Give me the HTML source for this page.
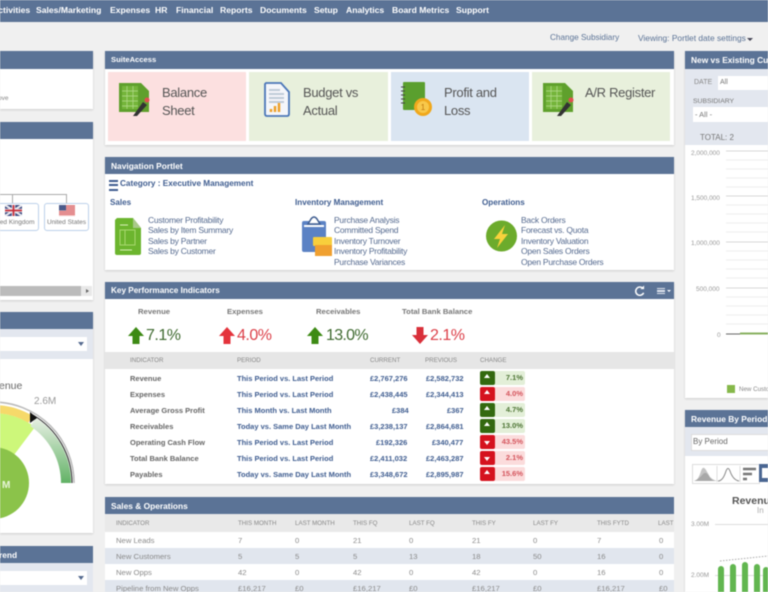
<!DOCTYPE html>
<html><head><meta charset="utf-8"><style>
html,body{margin:0;padding:0;background:#f0f0f0}
#p{position:relative;width:768px;height:592px;overflow:hidden;background:#f0f0f0;font-family:"Liberation Sans",sans-serif;filter:blur(.5px)}
#p div,#p span,#p svg{position:absolute}
#p span{white-space:nowrap;line-height:1}
.n{color:#fff;font-weight:bold;font-size:8.6px;top:6px}
.h{background:#5b7396;height:18px}
.ht{color:#fff;font-weight:bold;font-size:8.4px;margin-top:.8px}
.w{background:#fff;box-shadow:0 1px 2px #ccc}
.tt{font-size:13px;letter-spacing:-.3px;color:#555}
.l{font-size:8.5px;letter-spacing:-.25px;color:#566b90;margin-top:.4px}
.k{font-size:7.5px;color:#666;font-weight:bold}
.kt{font-size:7.7px;color:#777;font-weight:bold}
.pc{font-size:7.5px;color:#3f5d90;font-weight:bold}
.th{font-size:6.2px;color:#888}
.s{font-size:7.7px;color:#8a8a8a}
.big{font-size:16px}
.hd{font-size:8.1px;color:#3f5d90;font-weight:bold}
.ch{height:14px;left:480px;width:45px;border-radius:2px}
.ch i{position:absolute;left:0;top:0;width:15px;height:14px;border-radius:2px}
.ch i:after{content:"";position:absolute;left:4px;top:3px;border:3.5px solid transparent;border-top:0;border-bottom:4px solid #fff}
.ch.d i:after{border-bottom:0;border-top:4px solid #fff;top:6px}
.ch b{position:absolute;right:2px;top:3px;font-size:7.5px;line-height:1}
.g{background:#e3efd8}.g i{background:#33690f}.g b{color:#4d7434}
.r{background:#fbdcdc}.r i{background:#d5121e}.r b{color:#d4545c}
</style></head><body><div id="p">
<div style="left:0;top:0;width:768px;height:22px;background:#5b7396"></div>
<span class="n" style="left:-8px">Activities</span>
<span class="n" style="left:36px">Sales/Marketing</span>
<span class="n" style="left:110px">Expenses</span>
<span class="n" style="left:155px">HR</span>
<span class="n" style="left:176px">Financial</span>
<span class="n" style="left:220px">Reports</span>
<span class="n" style="left:260px">Documents</span>
<span class="n" style="left:314px">Setup</span>
<span class="n" style="left:346px">Analytics</span>
<span class="n" style="left:392px">Board Metrics</span>
<span class="n" style="left:456px">Support</span>
<span style="left:550px;top:33.500px;font-size:8.200px;color:#5b7396">Change Subsidiary</span>
<span style="left:638px;top:33.500px;font-size:8.400px;color:#5b7396">Viewing: Portlet date settings</span>
<div style="left:747px;top:38px;border:3px solid transparent;border-top:3px solid #445;border-bottom:0"></div>

<!-- left column -->
<div class="w" style="left:0;top:51px;width:93px;height:58px"></div>
<div class="h" style="left:0;top:51px;width:93px"></div>
<span style="left:-2px;top:96px;font-size:6.500px;color:#888">ove</span>
<div class="w" style="left:0;top:122px;width:93px;height:178px"></div>
<div class="h" style="left:0;top:122px;width:93px;height:17px"></div>
<div style="left:0;top:194px;width:66px;height:1px;background:#aaa"></div>
<div style="left:12px;top:194px;width:1px;height:9px;background:#aaa"></div>
<div style="left:66px;top:194px;width:1px;height:9px;background:#aaa"></div>
<div style="left:-10px;top:203px;width:47px;height:26px;background:#fff;border:1px solid #bcd0ea;border-radius:3px"></div>
<div style="left:44px;top:203px;width:43px;height:26px;background:#fff;border:1px solid #bcd0ea;border-radius:3px"></div>
<svg style="left:5px;top:205px" width="17" height="11" viewBox="0 0 17 11"><rect width="17" height="11" fill="#3c4a80"/><path d="M0 0L17 11M17 0L0 11" stroke="#e8e8ee" stroke-width="2"/><path d="M8.500 0V11M0 5.500H17" stroke="#e8e8ee" stroke-width="3.500"/><path d="M8.500 0V11M0 5.500H17" stroke="#c8303c" stroke-width="1.800"/></svg>
<svg style="left:59px;top:205px" width="16" height="11" viewBox="0 0 16 11"><rect width="16" height="11" fill="#f0b4b4"/><path d="M0 1H16M0 3H16M0 5H16M0 7H16M0 9H16" stroke="#d9686c" stroke-width=".9"/><rect width="7" height="5.500" fill="#4a5a8a"/></svg>
<span style="left:-2px;top:219.500px;font-size:6.500px;color:#777">ted Kingdom</span>
<span style="left:47px;top:219.500px;font-size:6.500px;color:#777">United States</span>
<div style="left:0;top:286px;width:81px;height:10px;background:#bbb"></div>
<div style="left:81px;top:286px;width:11px;height:10px;background:#e8e8e8"></div>
<div style="left:86px;top:289px;border:2px solid transparent;border-left:3px solid #666;border-right:0"></div>

<div class="w" style="left:0;top:312px;width:93px;height:221px"></div>
<div style="left:0;top:329px;width:93px;height:30px;background:#e3e7ef"></div>
<div class="h" style="left:0;top:312px;width:93px;height:17px"></div>
<div style="left:0;top:337px;width:87px;height:14px;background:#fff"></div>
<div style="left:78px;top:342px;border:3px solid transparent;border-top:4px solid #566b90;border-bottom:0"></div>
<span style="left:-1px;top:381px;font-size:10.500px;color:#666">enue</span>
<span style="left:34px;top:397px;font-size:10px;color:#999">2.6M</span>
<svg style="left:0;top:385px" width="93" height="148" viewBox="0 0 93 148">
<defs><linearGradient id="gg" x1="0" y1="0" x2="0" y2="1"><stop offset="0" stop-color="#e8f0e4"/><stop offset="1" stop-color="#62b266"/></linearGradient></defs>
<path d="M-7 28A70 70 0 0 1 35 42L-7 98Z" fill="#cdf77a"/>
<path d="M-7 20A78 78 0 0 1 32.500 30.800L28.500 37.700A70 70 0 0 0-7 28Z" fill="#f6d96a"/>
<path d="M35.900 32.900A78 78 0 0 1 71 98H61A68 68 0 0 0 30.400 41.200Z" fill="url(#gg)"/>
<path d="M-7 17A81 81 0 0 1 74 98" fill="none" stroke="#bbb" stroke-width="1.600"/>
<path d="M33 30A79 79 0 0 1 72 98" fill="none" stroke="#222" stroke-width="1"/>
<path d="M30 27L37 33L30 38Z" fill="#111"/>
<circle cx="-7" cy="98" r="36" fill="#8bc34a"/>
</svg>
<span style="left:2px;top:481px;font-size:10px;font-weight:bold;color:#e8f5d8">M</span>
<div class="h" style="left:0;top:546px;width:93px;height:17px"></div>
<span class="ht" style="left:-1px;top:550px">rend</span>
<div style="left:0;top:563px;width:93px;height:29px;background:#e3e7ef"></div>
<div style="left:0;top:571px;width:87px;height:14px;background:#fff"></div>
<div style="left:78px;top:576px;border:3px solid transparent;border-top:4px solid #566b90;border-bottom:0"></div>

<!-- SuiteAccess -->
<div class="w" style="left:105px;top:51px;width:569px;height:94px"></div>
<div class="h" style="left:105px;top:51px;width:569px"></div>
<span class="ht" style="left:111px;top:55px;font-size:7.600px">SuiteAccess</span>
<div style="left:108px;top:72px;width:138px;height:69px;background:#fce0e0"></div>
<div style="left:249px;top:72px;width:139px;height:69px;background:#e8f0dc"></div>
<div style="left:391px;top:72px;width:138px;height:69px;background:#dae5f1"></div>
<div style="left:532px;top:72px;width:138px;height:69px;background:#e8f0dc"></div>
<span class="tt" style="left:162px;top:86px">Balance</span><span class="tt" style="left:162px;top:104px">Sheet</span>
<span class="tt" style="left:303px;top:86px">Budget vs</span><span class="tt" style="left:303px;top:104px">Actual</span>
<span class="tt" style="left:444px;top:86px">Profit and</span><span class="tt" style="left:444px;top:104px">Loss</span>
<span class="tt" style="left:585px;top:86px">A/R Register</span>
<svg style="left:119px;top:83px" width="32" height="34" viewBox="0 0 32 34"><path d="M0 0H22L30 8V29H0Z" fill="#5fa02c"/><path d="M3 3H19V26H3Z" fill="#74b53a"/><path d="M3 8H19M3 13H19M3 18H19M3 23H19M8 3V26M14 3V26" stroke="#b5dc8e" stroke-width=".7"/><path d="M14 33L24 19L28 22L18 33Z" fill="#333"/><circle cx="28" cy="17" r="2.500" fill="#e05050"/></svg>
<svg style="left:264px;top:82px" width="26" height="35" viewBox="0 0 26 35"><path d="M2 1H17L25 10V32Q25 34 23 34H3Q1 34 1 32V2Z" fill="#f4f6fa" stroke="#4a76b8" stroke-width="1.800"/><path d="M5 8H16M5 12H20M5 16H20M5 20H20" stroke="#c0cad8" stroke-width="2"/><path d="M7 30V27M11 30V24M15 30V21" stroke="#eea02a" stroke-width="2.500"/></svg>
<svg style="left:401px;top:81px" width="32" height="36" viewBox="0 0 32 36"><rect x="2" y="1" width="22" height="28" rx="1" fill="#5a9f2e"/><path d="M0 6H4M0 10H4M0 14H4M0 18H4M0 22H4" stroke="#444" stroke-width="1"/><circle cx="22" cy="26" r="9" fill="#f0a81c"/><circle cx="22" cy="26" r="6" fill="#f8c84a"/><text x="22" y="29" font-size="8" text-anchor="middle" fill="#c07810" font-family="Liberation Sans">1</text></svg>
<svg style="left:543px;top:83px" width="32" height="34" viewBox="0 0 32 34"><path d="M0 0H22L30 8V29H0Z" fill="#5fa02c"/><path d="M3 3H19V26H3Z" fill="#74b53a"/><path d="M3 8H19M3 13H19M3 18H19M3 23H19M8 3V26M14 3V26" stroke="#b5dc8e" stroke-width=".7"/><path d="M14 33L24 19L28 22L18 33Z" fill="#333"/><circle cx="28" cy="17" r="2.500" fill="#e05050"/></svg>

<!-- Navigation -->
<div class="w" style="left:105px;top:157px;width:569px;height:113px"></div>
<div class="h" style="left:105px;top:157px;width:569px;height:17px"></div>
<span class="ht" style="left:111px;top:161px">Navigation Portlet</span>
<div style="left:109px;top:180px;width:9px;height:7px;border-top:2px solid #3f5d90;border-bottom:2px solid #3f5d90"></div>
<div style="left:109px;top:184px;width:9px;height:2px;background:#3f5d90"></div>
<span style="left:120px;top:180px;font-size:8.200px;color:#3f5d90;font-weight:bold">Category : Executive Management</span>
<span class="hd" style="left:110px;top:199px">Sales</span>
<span class="hd" style="left:295px;top:199px">Inventory Management</span>
<span class="hd" style="left:482px;top:199px">Operations</span>
<span class="l" style="left:148px;top:215.500px">Customer Profitability</span>
<span class="l" style="left:148px;top:226px">Sales by Item Summary</span>
<span class="l" style="left:148px;top:236.500px">Sales by Partner</span>
<span class="l" style="left:148px;top:247px">Sales by Customer</span>
<span class="l" style="left:334px;top:215.500px">Purchase Analysis</span>
<span class="l" style="left:334px;top:226px">Committed Spend</span>
<span class="l" style="left:334px;top:236.500px">Inventory Turnover</span>
<span class="l" style="left:334px;top:247px">Inventory Profitability</span>
<span class="l" style="left:334px;top:257.500px">Purchase Variances</span>
<span class="l" style="left:521px;top:215.500px">Back Orders</span>
<span class="l" style="left:521px;top:226px">Forecast vs. Quota</span>
<span class="l" style="left:521px;top:236.500px">Inventory Valuation</span>
<span class="l" style="left:521px;top:247px">Open Sales Orders</span>
<span class="l" style="left:521px;top:257.500px">Open Purchase Orders</span>
<svg style="left:115px;top:218px" width="27" height="38" viewBox="0 0 27 38"><path d="M2 0H18L26 10V35Q26 37 24 37H2Q0 37 0 35V2Z" fill="#6cb52e"/><path d="M18 0L26 10H18Z" fill="#a9c98a"/><path d="M5 7H13M5 32H17" stroke="#d8efb8" stroke-width="1"/><rect x="5" y="12" width="15" height="15" fill="none" stroke="#a8d870" stroke-width="1"/><path d="M10 12V27" stroke="#a8d870" stroke-width="1"/></svg>
<svg style="left:301px;top:215px" width="32" height="42" viewBox="0 0 32 42"><rect x="1" y="6" width="24" height="31" rx="2" fill="#5b82c4"/><path d="M7 9L10 4Q13 0 16 4L19 9Z" fill="#fff" stroke="#3f5d90" stroke-width="1.500"/><rect x="3" y="10" width="20" height="2" fill="#fff"/><rect x="12" y="22" width="19" height="9" rx="1" fill="#f8cf3c"/><rect x="14" y="30" width="17" height="11" fill="#f0a030"/></svg>
<svg style="left:486px;top:219px" width="31" height="35" viewBox="0 0 31 35"><circle cx="15.500" cy="17" r="15.500" fill="#6cab2c"/><path d="M19 6L8 20H14L11 29L22 15H16Z" fill="#f8d23c"/></svg>

<!-- KPI -->
<div class="w" style="left:105px;top:282px;width:569px;height:202px"></div>
<div class="h" style="left:105px;top:282px;width:569px;height:17px"></div>
<span class="ht" style="left:111px;top:286px;font-size:8.200px">Key Performance Indicators</span>
<svg style="left:634px;top:285px" width="11" height="12" viewBox="0 0 12 12"><path d="M10 3.500A4.500 4.500 0 1 0 10.500 8" fill="none" stroke="#fff" stroke-width="1.600"/><path d="M7 4H11V0Z" fill="#fff"/></svg>
<div style="left:657px;top:288px;width:8px;height:4px;border-top:1.500px solid #dfe5ee;border-bottom:1.500px solid #dfe5ee"></div>
<div style="left:657px;top:290px;width:8px;height:1.500px;background:#dfe5ee"></div>
<div style="left:667px;top:290px;border:2px solid transparent;border-top:2px solid #fff;border-bottom:0"></div>
<span class="kt" style="left:138px;top:308px">Revenue</span>
<span class="kt" style="left:227px;top:308px">Expenses</span>
<span class="kt" style="left:316px;top:308px">Receivables</span>
<span class="kt" style="left:402px;top:308px">Total Bank Balance</span>
<svg style="left:128px;top:327px" width="16" height="17" viewBox="0 0 16 17"><path d="M8 0L16 9H11.500V17H4.500V9H0Z" fill="#3d8a14"/></svg>
<svg style="left:219px;top:327px" width="16" height="17" viewBox="0 0 16 17"><path d="M8 0L16 9H11.500V17H4.500V9H0Z" fill="#e4333c"/></svg>
<svg style="left:307px;top:327px" width="16" height="17" viewBox="0 0 16 17"><path d="M8 0L16 9H11.500V17H4.500V9H0Z" fill="#3d8a14"/></svg>
<svg style="left:412px;top:327px" width="16" height="17" viewBox="0 0 16 17"><path d="M8 17L16 8H11.500V0H4.500V8H0Z" fill="#d9303a"/></svg>
<span class="big" style="left:146px;top:328px;color:#3f6a30;letter-spacing:-.5px">7.1%</span>
<span class="big" style="left:237px;top:328px;color:#dc3f48;letter-spacing:-.5px">4.0%</span>
<span class="big" style="left:326px;top:328px;color:#3f6a30;letter-spacing:-.7px">13.0%</span>
<span class="big" style="left:430px;top:328px;color:#dc3f48;letter-spacing:-.5px">2.1%</span>
<div style="left:105px;top:352px;width:569px;height:17px;background:#e6e6e6"></div>
<span class="th" style="left:130px;top:358px">INDICATOR</span>
<span class="th" style="left:237px;top:358px">PERIOD</span>
<span class="th" style="left:370px;top:358px">CURRENT</span>
<span class="th" style="left:425px;top:358px">PREVIOUS</span>
<span class="th" style="left:480px;top:358px">CHANGE</span>

<span class="k" style="left:130px;top:374.500px">Revenue</span><span class="pc" style="left:237px;top:374.500px">This Period vs. Last Period</span><span class="pc" style="left:370px;top:374.500px">£2,767,276</span><span class="pc" style="left:426px;top:374.500px">£2,582,732</span>
<span class="k" style="left:130px;top:390.500px">Expenses</span><span class="pc" style="left:237px;top:390.500px">This Period vs. Last Period</span><span class="pc" style="left:370px;top:390.500px">£2,438,445</span><span class="pc" style="left:426px;top:390.500px">£2,344,413</span>
<span class="k" style="left:130px;top:406.500px">Average Gross Profit</span><span class="pc" style="left:237px;top:406.500px">This Month vs. Last Month</span><span class="pc" style="left:392px;top:406.500px">£384</span><span class="pc" style="left:447px;top:406.500px">£367</span>
<span class="k" style="left:130px;top:422.500px">Receivables</span><span class="pc" style="left:237px;top:422.500px">Today vs. Same Day Last Month</span><span class="pc" style="left:370px;top:422.500px">£3,238,137</span><span class="pc" style="left:426px;top:422.500px">£2,864,681</span>
<span class="k" style="left:130px;top:438.500px">Operating Cash Flow</span><span class="pc" style="left:237px;top:438.500px">This Period vs. Last Period</span><span class="pc" style="left:376px;top:438.500px">£192,326</span><span class="pc" style="left:432px;top:438.500px">£340,477</span>
<span class="k" style="left:130px;top:454.500px">Total Bank Balance</span><span class="pc" style="left:237px;top:454.500px">This Period vs. Last Period</span><span class="pc" style="left:370px;top:454.500px">£2,411,032</span><span class="pc" style="left:426px;top:454.500px">£2,463,287</span>
<span class="k" style="left:130px;top:470.500px">Payables</span><span class="pc" style="left:237px;top:470.500px">Today vs. Same Day Last Month</span><span class="pc" style="left:370px;top:470.500px">£3,348,672</span><span class="pc" style="left:426px;top:470.500px">£2,895,987</span>

<div class="ch g" style="top:371px"><i></i><b>7.1%</b></div>
<div class="ch r" style="top:387px"><i></i><b>4.0%</b></div>
<div class="ch g" style="top:403px"><i></i><b>4.7%</b></div>
<div class="ch g" style="top:419px"><i></i><b>13.0%</b></div>
<div class="ch r d" style="top:435px"><i></i><b>43.5%</b></div>
<div class="ch r d" style="top:451px"><i></i><b>2.1%</b></div>
<div class="ch r" style="top:467px"><i></i><b>15.6%</b></div>

<!-- Sales & Ops -->
<div style="left:105px;top:497px;width:569px;height:95px;background:#fff"></div>
<div class="h" style="left:105px;top:497px;width:569px;height:17px"></div>
<span class="ht" style="left:111px;top:501px">Sales &amp; Operations</span>
<div style="left:105px;top:514px;width:569px;height:18px;background:#e9e9e9"></div>
<div style="left:105px;top:548px;width:569px;height:16px;background:#e1e6ee"></div>
<div style="left:105px;top:580px;width:569px;height:12px;background:#e1e6ee"></div>
<span class="th" style="left:116px;top:520.500px">INDICATOR</span><span class="th" style="left:238px;top:520.500px">THIS MONTH</span><span class="th" style="left:295px;top:520.500px">LAST MONTH</span><span class="th" style="left:353px;top:520.500px">THIS FQ</span><span class="th" style="left:409px;top:520.500px">LAST FQ</span><span class="th" style="left:472px;top:520.500px">THIS FY</span><span class="th" style="left:533px;top:520.500px">LAST FY</span><span class="th" style="left:597px;top:520.500px">THIS FYTD</span><span class="th" style="left:658px;top:520.500px">LAST</span>
<span class="s" style="left:116px;top:536.500px">New Leads</span><span class="s" style="left:238px;top:536.500px">7</span><span class="s" style="left:295px;top:536.500px">0</span><span class="s" style="left:353px;top:536.500px">21</span><span class="s" style="left:409px;top:536.500px">0</span><span class="s" style="left:472px;top:536.500px">21</span><span class="s" style="left:533px;top:536.500px">0</span><span class="s" style="left:597px;top:536.500px">7</span><span class="s" style="left:659px;top:536.500px">0</span>
<span class="s" style="left:116px;top:552.500px">New Customers</span><span class="s" style="left:238px;top:552.500px">5</span><span class="s" style="left:295px;top:552.500px">5</span><span class="s" style="left:353px;top:552.500px">5</span><span class="s" style="left:409px;top:552.500px">13</span><span class="s" style="left:472px;top:552.500px">18</span><span class="s" style="left:533px;top:552.500px">50</span><span class="s" style="left:597px;top:552.500px">16</span><span class="s" style="left:659px;top:552.500px">0</span>
<span class="s" style="left:116px;top:568.500px">New Opps</span><span class="s" style="left:238px;top:568.500px">42</span><span class="s" style="left:295px;top:568.500px">0</span><span class="s" style="left:353px;top:568.500px">42</span><span class="s" style="left:409px;top:568.500px">0</span><span class="s" style="left:472px;top:568.500px">42</span><span class="s" style="left:533px;top:568.500px">0</span><span class="s" style="left:597px;top:568.500px">16</span><span class="s" style="left:659px;top:568.500px">0</span>
<span class="s" style="left:116px;top:584.500px">Pipeline from New Opps</span><span class="s" style="left:238px;top:584.500px">£16,217</span><span class="s" style="left:295px;top:584.500px">£0</span><span class="s" style="left:353px;top:584.500px">£16,217</span><span class="s" style="left:409px;top:584.500px">£0</span><span class="s" style="left:472px;top:584.500px">£16,217</span><span class="s" style="left:533px;top:584.500px">£0</span><span class="s" style="left:597px;top:584.500px">£16,217</span><span class="s" style="left:659px;top:584.500px">£0</span>

<!-- Right column -->
<div class="w" style="left:685px;top:51px;width:83px;height:347px"></div>
<div style="left:685px;top:69px;width:83px;height:76px;background:#e3e7ef"></div>
<div class="h" style="left:685px;top:51px;width:83px"></div>
<span class="ht" style="left:691px;top:55px">New vs Existing Customers</span>
<span class="th" style="left:694px;top:79px;font-size:7px">DATE</span>
<div style="left:718px;top:76px;width:50px;height:14px;background:#fff"></div>
<span class="th" style="left:720px;top:79px;font-size:7px;color:#777">All</span>
<span class="th" style="left:693px;top:98.500px;font-size:6.800px;color:#777">SUBSIDIARY</span>
<div style="left:693px;top:107px;width:75px;height:15px;background:#fff"></div>
<span class="th" style="left:695px;top:111px;font-size:7.500px;color:#777">- All -</span>
<span class="th" style="left:700px;top:134px;font-size:8px;color:#777">TOTAL: 2</span>
<span class="th" style="left:691px;top:150.500px;font-size:6.500px;color:#999">2,000,000</span>
<span class="th" style="left:691px;top:195.500px;font-size:6.500px;color:#999">1,500,000</span>
<span class="th" style="left:691px;top:241px;font-size:6.500px;color:#999">1,000,000</span>
<span class="th" style="left:696px;top:287px;font-size:6.500px;color:#999">500,000</span>
<span class="th" style="left:717px;top:333px;font-size:6.500px;color:#999">0</span>
<svg style="left:726px;top:144px" width="42" height="195" viewBox="0 0 42 195">
<path d="M0 7H42M0 52H42M0 98H42M0 144H42" stroke="#d8d8d8" stroke-width="1"/>
<path d="M0 16H42M0 25H42M0 34H42M0 43H42M0 61H42M0 70H42M0 79H42M0 88H42M0 107H42M0 116H42M0 125H42M0 134H42M0 153H42M0 162H42M0 171H42M0 180H42" stroke="#eee" stroke-width="1"/>
<path d="M0 190H42" stroke="#666" stroke-width="1"/><path d="M14 189.500H42" stroke="#88b060" stroke-width="2"/>
</svg>
<div style="left:727px;top:385px;width:8px;height:8px;background:#86b84a"></div>
<span class="th" style="left:739px;top:387px;color:#888">New Customers</span>

<div class="w" style="left:685px;top:410px;width:83px;height:182px"></div>
<div style="left:685px;top:427px;width:83px;height:29px;background:#e3e7ef"></div>
<div class="h" style="left:685px;top:410px;width:83px;height:17px"></div>
<span class="ht" style="left:691px;top:414px">Revenue By Period Trend</span>
<div style="left:691px;top:434px;width:77px;height:15px;background:#fff;border:1px solid #ddd"></div>
<span style="left:693px;top:438px;font-size:8px;color:#666">By Period</span>
<div style="left:692px;top:464px;width:66px;height:18px;background:#fff;border:1px solid #ddd"></div>
<svg style="left:693px;top:465px" width="66" height="18" viewBox="0 0 66 18"><path d="M1 16Q5 16 8 6Q10 0 13 5L17 12Q20 15 24 16Z" fill="#c4c4c4"/><path d="M1 16Q6 14 10 9Q13 6 16 11Q18 16 24 16Z" fill="#a8a8a8"/><path d="M24 1V17M47 1V17" stroke="#ddd"/><path d="M25 16Q30 16 33 6Q35 1 37 6Q40 15 46 16" fill="none" stroke="#888"/><path d="M50 4H63M50 9H59M50 14H54" stroke="#777" stroke-width="2.500"/></svg>
<div style="left:759px;top:464px;width:9px;height:18px;background:#4a6692"></div>
<div style="left:762px;top:468px;width:6px;height:10px;background:#fff"></div>
<span style="left:732px;top:495.500px;font-size:10.500px;font-weight:bold;color:#555">Revenue</span>
<span style="left:757px;top:507px;font-size:8px;color:#aaa">In</span>
<span class="th" style="left:691px;top:522px;font-size:6.500px;color:#999">3.00M</span>
<span class="th" style="left:691px;top:573px;font-size:6.500px;color:#999">2.00M</span>
<svg style="left:715px;top:520px" width="53" height="72" viewBox="0 0 53 72"><path d="M0 4.500H53M0 55.500H53" stroke="#ddd"/><path d="M5 41L53 36" stroke="#aaa" stroke-dasharray="1.500 1.500"/><path d="M6 72V49M18 72V47M30 72V45M42 72V47M51 72V50" stroke="#62b650" stroke-width="6" stroke-linecap="round"/></svg>
</div></body></html>
